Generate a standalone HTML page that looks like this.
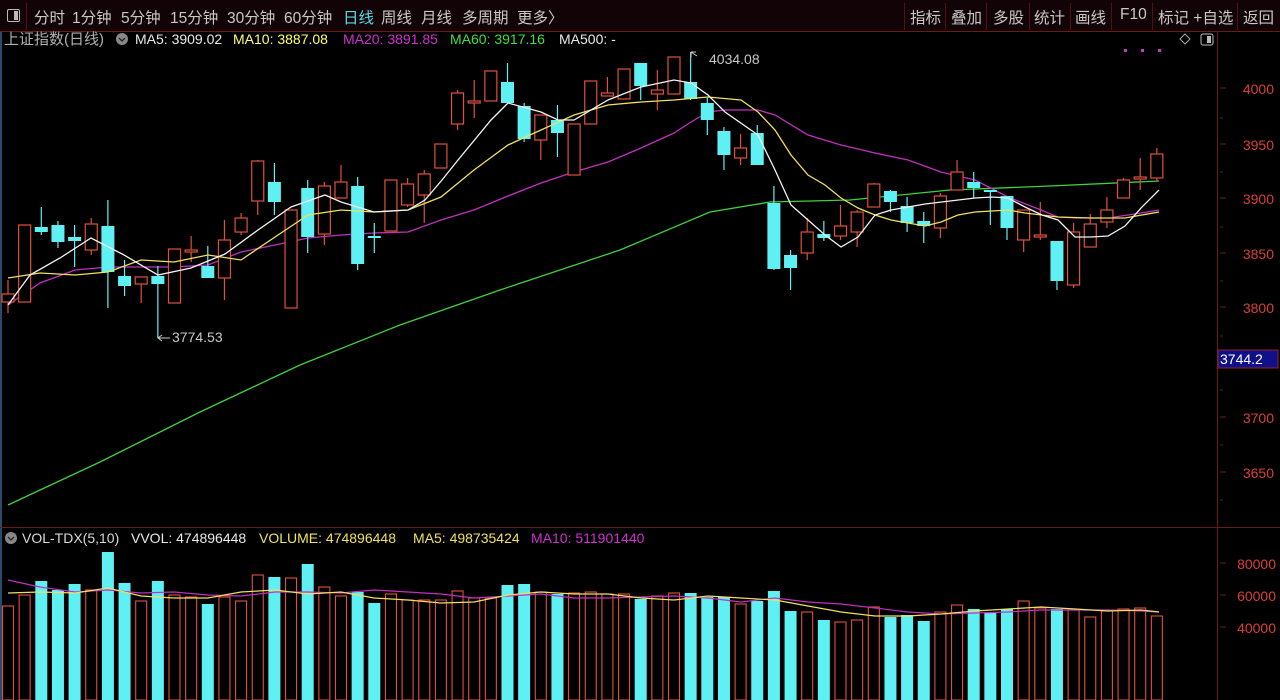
<!DOCTYPE html>
<html><head><meta charset="utf-8">
<style>
html,body{margin:0;padding:0;background:#000;width:1280px;height:700px;overflow:hidden;font-family:"Liberation Sans","Noto Sans CJK SC",sans-serif;}
#top{position:absolute;left:0;top:0;width:1280px;height:31px;background:#120406;border-bottom:1px solid #6a1a1a;}
#top span{position:absolute;top:6px;font-size:15.5px;color:#c8c8c8;white-space:nowrap;}
.sep{position:absolute;top:3px;width:1px;height:27px;background:#4a1414;}
svg{position:absolute;left:0;top:0;}
</style></head><body>
<div id="top">
<div style="position:absolute;left:7px;top:9px;width:11px;height:11px;border:1px solid #bbb;border-radius:2px;"><div style="position:absolute;right:1px;top:1px;width:4px;height:9px;background:#bbb"></div></div>
<div class="sep" style="left:26px"></div>
<span style="left:34px">分时</span><span style="left:72px">1分钟</span><span style="left:121px">5分钟</span><span style="left:170px">15分钟</span><span style="left:227px">30分钟</span><span style="left:284px">60分钟</span><span style="left:343px;color:#5fd8e8">日线</span><span style="left:381px">周线</span><span style="left:421px">月线</span><span style="left:462px">多周期</span><span style="left:517px">更多〉</span>
<div class="sep" style="left:904px"></div>
<span style="left:910px">指标</span><div class="sep" style="left:945px"></div>
<span style="left:951px">叠加</span><div class="sep" style="left:986px"></div>
<span style="left:993px">多股</span><div class="sep" style="left:1029px"></div>
<span style="left:1034px">统计</span><div class="sep" style="left:1070px"></div>
<span style="left:1075px">画线</span><div class="sep" style="left:1111px"></div>
<span style="left:1120px">F10</span><div class="sep" style="left:1152px"></div>
<span style="left:1158px">标记 +自选</span><div class="sep" style="left:1237px"></div>
<span style="left:1243px">返回</span>
</div>
<svg id="s" width="1280" height="700" style="top:0" xmlns="http://www.w3.org/2000/svg"></svg>
<script>
var S=document.getElementById('s'),h='';
var R='#e0503a',C='#5ff0f4';
function ln(x1,y1,x2,y2,c,w){h+='<line x1="'+x1+'" y1="'+y1+'" x2="'+x2+'" y2="'+y2+'" stroke="'+c+'" stroke-width="'+(w||1)+'"/>';}
function pl(p,c,w){h+='<polyline fill="none" stroke="'+c+'" stroke-width="'+(w||1.3)+'" points="'+p.map(function(a){return a.join(',')}).join(' ')+'"/>';}
function tx(x,y,t,c,s,a){h+='<text x="'+x+'" y="'+y+'" fill="'+c+'" font-size="'+(s||13)+'" font-family="Liberation Sans,Noto Sans CJK SC,sans-serif"'+(a?' text-anchor="'+a+'"':'')+'>'+t+'</text>';}
ln(1,32,1,700,'#2a4a6a',2);
ln(1217.5,32,1217.5,700,'#6a1a1a',1);
ln(0,527.5,1280,527.5,'#6a1a1a',1);
[[4000,89],[3950,145],[3900,199],[3850,254],[3800,308],[3700,418],[3650,473]].forEach(function(a){ln(1220,a[1]-1,1226,a[1]-1,'#6a2020');tx(1274,a[1]+5,a[0],'#d8403a',14,'end');});
[118,172,227,281,336,390,445,500].forEach(function(y){ln(1220,y,1223,y,'#5a1a1a');});
h+='<rect x="1218" y="350" width="60" height="18" fill="#10108a" stroke="#a02020"/>';
tx(1220,364,'3744.2','#fff',14);
[[80000,564],[60000,596],[40000,628]].forEach(function(a){ln(1220,a[1]-1,1226,a[1]-1,'#6a2020');tx(1276,a[1]+5,a[0],'#d8403a',14,'end');});
tx(4,44,'上证指数(日线)','#b0b0b0',15);
h+='<circle cx="122" cy="39" r="6" fill="#888"/><path d="M119 38l3 3 3-3" stroke="#222" fill="none" stroke-width="1.3"/>';
tx(135,44,'MA5: 3909.02','#e8e8e8',14);
tx(233,44,'MA10: 3887.08','#ffff70',14);
tx(343,44,'MA20: 3891.85','#d030d0',14);
tx(450,44,'MA60: 3917.16','#40e040',14);
tx(559,44,'MA500: -','#e8e8e8',14);
h+='<path d="M1185 34l5 5-5 5-5-5z" stroke="#aaa" fill="none"/><rect x="1201" y="34" width="12" height="11" rx="2" fill="none" stroke="#bbb"/><rect x="1207" y="36" width="4" height="7" fill="#bbb"/>';
[1124,1141,1158].forEach(function(x){h+='<rect x="'+x+'" y="49" width="3" height="3" fill="#c040c0"/>';});
var K=[[294,302,280,313,R],[225,302,225,302,R],[227,232,207,235,C],[225,242,221,248,C],[237,241,225,267,C],[224,250,218,255,R],[226,272,200,308,C],[276,286,260,296,C],[277,284,277,303,R],[276,284,266,338,C],
[249,303,249,303,R],[250,252,236,262,R],[266,278,246,278,C],[240,278,220,300,R],[218,232,213,235,R],[161,201,160,215,R],[182,202,163,215,C],[210,308,210,308,R],[188,237,180,253,C],[186,234,182,245,R],
[182,198,165,198,R],[186,264,177,270,C],[236,238,223,253,C],[180,231,180,231,R],[184,205,178,207,R],[174,195,170,223,R],[144,168,144,168,R],[93,124,90,130,R],[101,103,80,118,R],[71,101,71,101,R],
[82,103,63,103,C],[106,139,103,142,C],[115,140,115,160,R],[120,133,105,157,C],[124,175,124,175,R],[81,124,81,124,R],[93,96,77,96,R],[69,99,69,99,R],[63,86,63,100,C],[90,94,70,110,R],
[57,94,57,94,R],[82,99,52,100,C],[103,120,98,135,C],[131,155,127,170,C],[148,158,134,165,R],[133,165,125,165,C],[203,269,186,270,C],[255,268,250,290,C],[232,253,218,260,R],[234,238,221,241,C],
[226,236,205,240,R],[212,232,210,247,R],[184,207,183,207,R],[191,202,190,212,C],[206,223,197,232,C],[221,226,212,243,C],[196,228,193,238,R],[172,190,160,190,R],[182,188,172,198,C],[190,192,190,225,C],
[196,228,196,240,C],[210,240,210,252,R],[235,237,202,240,R],[241,281,241,290,C],[232,285,223,288,R],[224,247,214,247,R],[210,222,197,228,R],[180,198,178,198,R],[177,179,158,190,R],[154,178,148,182,R]];
var V=[606,595,581,590,584,590,552,583,601,581,595,597,604,597,601,575,577,578,564,587,596,592,603,594,600,600,600,591,598,598,585,584,592,594,593,592,594,594,599,596,593,593,597,597,604,601,591,611,612,620,622,620,607,617,615,621,612,605,609,612,609,601,608,609,610,617,611,609,608,616];
pl([[8,505],[100,462],[200,412],[300,365],[400,325],[500,290],[620,250],[710,212],[770,202],[850,200],[950,190],[1050,186],[1159,181]],'#40d040',1.3);
pl([[8,305],[40,283],[75,270],[108,267],[141,267],[174,267],[208,265],[241,252],[275,245],[308,238],[341,235],[374,233],[408,232],[441,220],[474,210],[508,196],[541,183],[574,172],[608,162],[641,148],[674,133],[691,122],[708,112],[725,110],[758,110],[775,115],[808,135],[841,145],[875,153],[908,160],[941,172],[975,180],[1008,197],[1041,210],[1058,217],[1075,218],[1108,218],[1141,213],[1159,210]],'#c030c0',1.3);
K.forEach(function(k,i){var x=8+16.65*i,c=k[4];
 ln(x,k[2],x,k[3],c,1.2);
 var hgt=Math.max(k[1]-k[0],1.5);
 if(c==R){h+='<rect x="'+(x-6)+'" y="'+k[0]+'" width="12" height="'+hgt+'" fill="#000" stroke="'+R+'" stroke-width="1.2"/>';}
 else h+='<rect x="'+(x-6.5)+'" y="'+k[0]+'" width="13" height="'+hgt+'" fill="'+C+'"/>';
 var v=V[i];
 if(c==R)h+='<rect x="'+(x-5.5)+'" y="'+v+'" width="11" height="'+(700-v)+'" fill="none" stroke="'+R+'" stroke-width="1.1"/>';
 else h+='<rect x="'+(x-6)+'" y="'+v+'" width="12" height="'+(700-v)+'" fill="'+C+'"/>';
});
pl([[8,278],[40,273],[75,275],[108,272],[141,260],[174,262],[208,255],[241,260],[275,237],[308,215],[341,210],[374,212],[408,210],[441,197],[474,170],[508,145],[541,130],[574,115],[608,105],[641,102],[674,100],[708,97],[741,100],[758,112],[775,130],[791,155],[808,175],[825,185],[841,198],[858,208],[875,215],[891,220],[908,223],[925,226],[941,222],[958,215],[975,212],[1008,210],[1025,213],[1058,217],[1091,218],[1125,218],[1159,212]],'#f0e060',1.3);
pl([[8,305],[30,275],[60,258],[91,238],[124,255],[158,275],[191,268],[225,254],[258,230],[291,207],[325,195],[341,202],[374,212],[408,210],[425,200],[442,180],[458,160],[491,120],[508,103],[541,112],[558,120],[574,120],[608,100],[641,87],[674,80],[691,83],[708,95],[725,112],[758,135],[775,170],[791,205],[808,220],[825,235],[841,247],[858,237],[875,215],[891,210],[925,204],[975,198],[992,197],[1008,198],[1025,207],[1042,215],[1058,220],[1075,237],[1091,237],[1108,236],[1125,226],[1142,207],[1159,190]],'#f4f4f4',1.3);
ln(158,338,170,338,'#ccc');tx(172,342,'3774.53','#c8c8c8',14);h+='<path d="M162 335l-4 3 4 3" stroke="#ccc" fill="none"/>';
h+='<path d="M691 52l6 4M691 52l0 5M691 52l5 0" stroke="#ccc" fill="none"/>';tx(709,64,'4034.08','#c8c8c8',14);
pl([[8,580],[40,587],[75,592],[108,590],[141,593],[174,592],[208,595],[241,596],[275,592],[308,592],[341,593],[374,590],[408,592],[441,594],[474,598],[508,596],[541,594],[574,598],[608,598],[641,597],[674,596],[708,598],[741,602],[775,598],[808,602],[841,604],[875,608],[908,612],[941,614],[975,613],[1008,612],[1041,610],[1075,610],[1108,610],[1141,611],[1159,612]],'#c030c0',1.2);
pl([[8,593],[40,592],[75,593],[108,588],[141,596],[174,598],[208,598],[241,592],[275,590],[308,594],[341,592],[374,598],[408,600],[441,603],[474,602],[508,595],[541,592],[574,594],[608,594],[641,598],[674,600],[708,596],[741,598],[775,600],[808,606],[841,612],[875,616],[908,616],[941,614],[975,611],[1008,609],[1041,607],[1075,609],[1108,611],[1141,610],[1159,612]],'#f0e060',1.2);
h+='<circle cx="11" cy="538" r="6" fill="#888"/><path d="M8 537l3 3 3-3" stroke="#222" fill="none" stroke-width="1.3"/>';
tx(22,543,'VOL-TDX(5,10)','#d8d8d8',14);
tx(131,543,'VVOL: 474896448','#e8e8e8',14);
tx(259,543,'VOLUME: 474896448','#f0e060',14);
tx(413,543,'MA5: 498735424','#f0e060',14);
tx(531,543,'MA10: 511901440','#d030d0',14);
S.innerHTML=h;
</script>
</body></html>
